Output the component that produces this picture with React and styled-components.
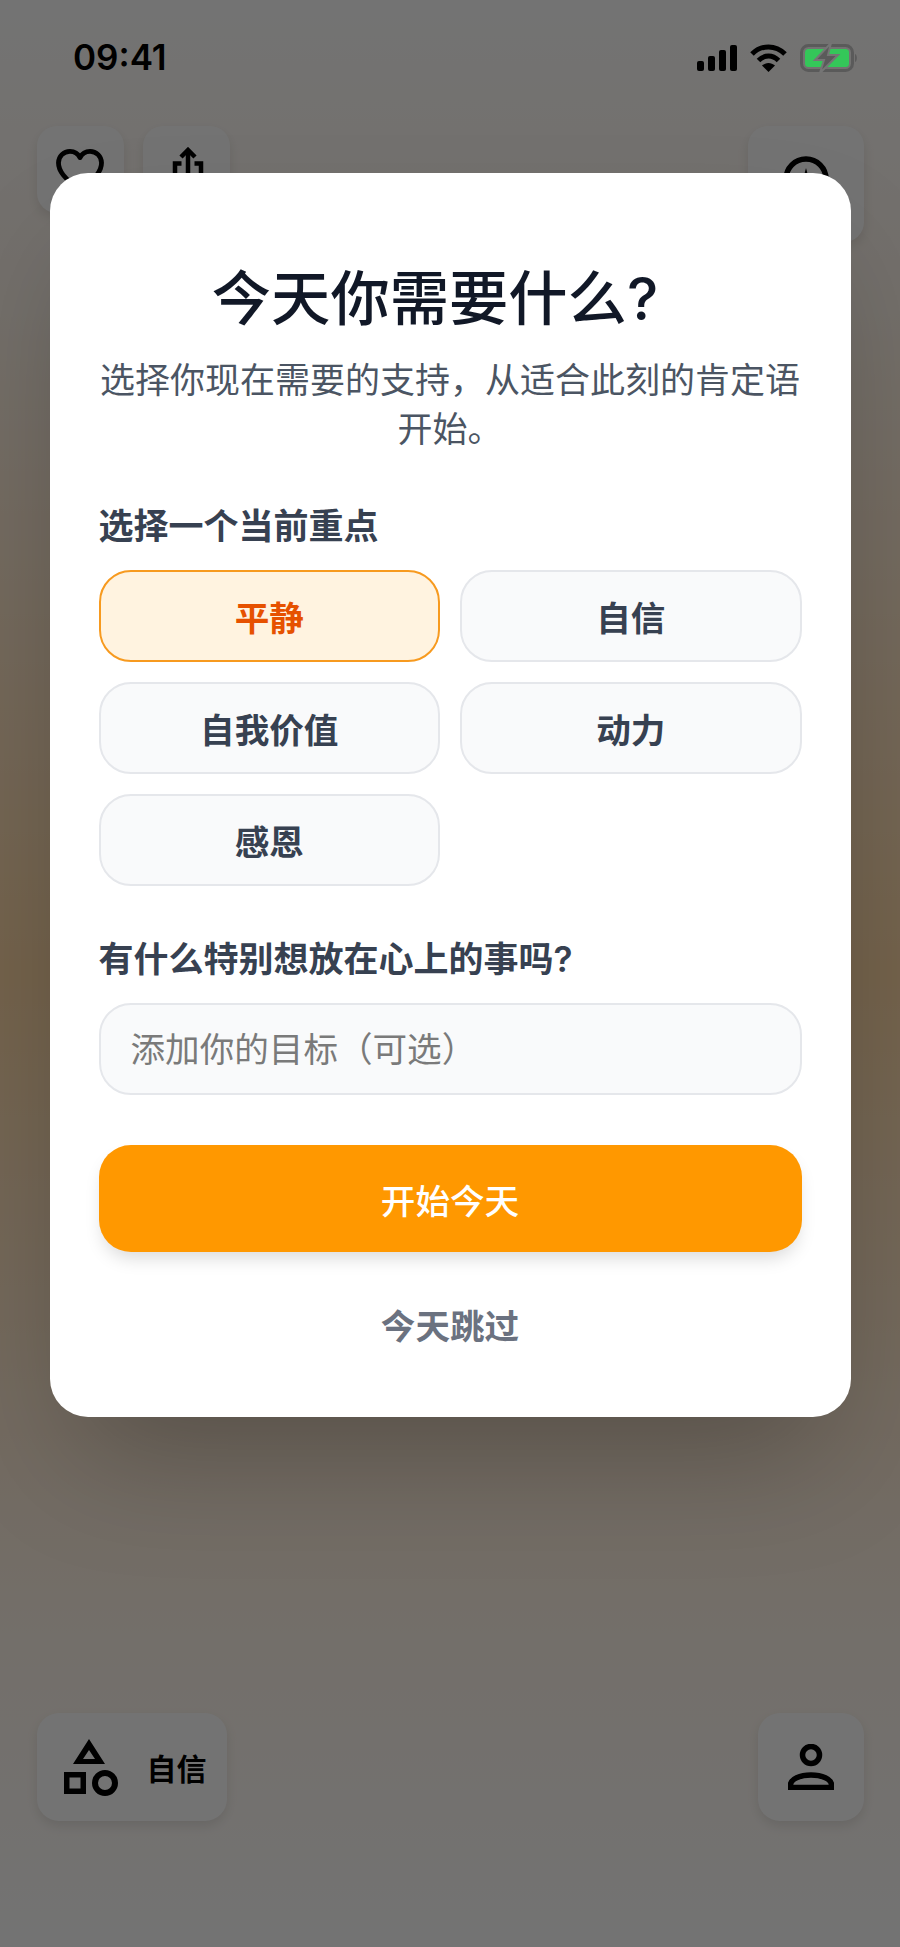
import React from 'react';
import styled, { createGlobalStyle } from 'styled-components';

const GlobalStyle = createGlobalStyle`
  html, body {
    margin: 0;
    padding: 0;
  }
  body {
    font-family: Inter, "Noto Sans CJK SC", sans-serif;
  }
  * {
    box-sizing: border-box;
  }
`;

const Screen = styled.div`
  position: relative;
  width: 900px;
  height: 1947px;
  overflow: hidden;
  display: flex;
  flex-direction: column;
  background: linear-gradient(
    180deg,
    #ffffff 0%,
    #fff6ec 15%,
    #ffe9cf 30%,
    #ffd9a6 50%,
    #ffe9cf 70%,
    #fff6ec 85%,
    #ffffff 100%
  );
`;

const StatusBar = styled.div`
  height: 126px;
  padding: 37px 42px 0 73px;
  display: flex;
  justify-content: space-between;
  align-items: flex-start;
  position: relative;
  z-index: 3;
`;

const Clock = styled.span`
  font-size: 35px;
  font-weight: 600;
  line-height: 40px;
  color: #000;
`;

const StatusIcons = styled.div`
  display: flex;
  align-items: center;
  gap: 13px;
  margin-top: 6px;
`;

const TopBar = styled.div`
  display: flex;
  justify-content: space-between;
  align-items: flex-start;
  padding: 0 36px 0 36.5px;
`;

const TopGroup = styled.div`
  display: flex;
  gap: 19px;
`;

const IconButton = styled.div`
  width: ${(p) => p.$size}px;
  height: ${(p) => p.$size}px;
  border-radius: 20px;
  background: #ffffff;
  box-shadow: 0 5px 12px rgba(0, 0, 0, 0.1);
  display: flex;
  justify-content: center;
  padding-top: ${(p) => p.$iconTop}px;
`;

const BottomBar = styled.div`
  margin-top: auto;
  margin-bottom: 126px;
  display: flex;
  justify-content: space-between;
  padding: 0 36px 0 36.5px;
`;

const ModeButton = styled.div`
  width: 190px;
  height: 108px;
  border-radius: 22px;
  background: #ffffff;
  box-shadow: 0 5px 12px rgba(0, 0, 0, 0.1);
  display: flex;
  align-items: center;
  gap: 29px;
  padding-left: 27px;
  font-size: 30px;
  font-weight: 600;
  color: #000;
`;

const ProfileButton = styled.div`
  width: 106px;
  height: 108px;
  border-radius: 22px;
  background: #ffffff;
  box-shadow: 0 5px 12px rgba(0, 0, 0, 0.1);
  display: flex;
  align-items: center;
  justify-content: center;
`;

const Overlay = styled.div`
  position: absolute;
  inset: 0;
  z-index: 2;
  background: rgba(0, 0, 0, 0.55);
  display: flex;
  justify-content: center;
  align-items: flex-start;
  padding-top: 173px;
`;

const Card = styled.section`
  width: 801px;
  height: 1244px;
  padding: 89px 49px 0;
  border-radius: 38px;
  background: #fff;
  box-shadow: 0 62px 124px -30px rgba(0, 0, 0, 0.25);
  display: flex;
  flex-direction: column;
`;

/* the heading sits a little left of centre in the reference */
const Title = styled.h2`
  margin: 0;
  padding-right: 30px;
  font-size: 59.3px;
  font-weight: 500;
  line-height: 74px;
  text-align: center;
  color: #111827;
`;

const Subtitle = styled.p`
  margin: 20px 0 0;
  font-size: 35px;
  line-height: 49px;
  text-align: center;
  color: #4b5563;
`;

const Label = styled.h3`
  margin: ${(p) => p.$top}px 0 0;
  font-size: 35px;
  font-weight: 600;
  line-height: 49px;
  color: #374151;
`;

const Options = styled.div`
  margin-top: 19px;
  display: grid;
  grid-template-columns: 1fr 1fr;
  gap: 20px;
`;

const Option = styled.button`
  height: 92px;
  padding: 0;
  border-radius: 32px;
  border: 2.5px solid ${(p) => (p.$active ? '#f79a1f' : '#e5e7eb')};
  background: ${(p) => (p.$active ? '#fff3e0' : '#f9fafb')};
  color: ${(p) => (p.$active ? '#e65100' : '#374151')};
  font-family: inherit;
  font-size: 34.6px;
  font-weight: 600;
`;

const GoalInput = styled.input`
  margin-top: 19px;
  width: 100%;
  height: 92px;
  padding: 0 30px;
  border-radius: 32px;
  border: 2.5px solid #e5e7eb;
  background: #f9fafb;
  font-family: inherit;
  font-size: 34.6px;
  outline: none;

  &::placeholder {
    color: #7a7a7a;
    opacity: 1;
  }
`;

const StartButton = styled.button`
  margin-top: 50px;
  height: 107px;
  border: none;
  border-radius: 32px;
  background: #ff9800;
  color: #fff;
  font-family: inherit;
  font-size: 34.6px;
  font-weight: 500;
  box-shadow: 0 10px 18px -4px rgba(0, 0, 0, 0.15);
`;

const SkipButton = styled.button`
  margin-top: 46px;
  height: 52px;
  border: none;
  background: none;
  color: #6b7280;
  font-family: inherit;
  font-size: 34.6px;
  font-weight: 600;
`;

const options = [
  { id: 'calm', label: '平静', active: true },
  { id: 'confidence', label: '自信' },
  { id: 'worth', label: '自我价值' },
  { id: 'drive', label: '动力' },
  { id: 'gratitude', label: '感恩' },
];

function SignalIcon() {
  return (
    <svg width="40" height="26" viewBox="0 0 40 26" fill="#000">
      <rect x="0" y="16" width="7" height="10" rx="2" />
      <rect x="11" y="11" width="7" height="15" rx="2" />
      <rect x="22" y="5" width="7" height="21" rx="2" />
      <rect x="33" y="0" width="7" height="26" rx="2" />
    </svg>
  );
}

function WifiIcon() {
  return (
    <svg width="37" height="28" viewBox="0 0 37 28" fill="none" stroke="#000" strokeWidth="5">
      <path d="M2 10C11.5 0.5 25.5 0.5 35 10" />
      <path d="M8.5 16.5C14.5 10.5 22.5 10.5 28.5 16.5" />
      <path d="M18.5 28L12 21.5C16 18 21 18 25 21.5Z" fill="#000" stroke="none" />
    </svg>
  );
}

function BatteryIcon() {
  return (
    <svg width="58" height="30" viewBox="0 0 58 30">
      <rect x="1.5" y="2.5" width="51" height="25" rx="7" fill="none" stroke="#5a5a5a" strokeWidth="3" />
      <rect x="5" y="6" width="44" height="18" rx="3.5" fill="#34c759" />
      <path d="M55 11C57.5 12 57.5 18 55 19Z" fill="#5a5a5a" />
      <path d="M31 0L15 17H24L20 30L38 12H28Z" fill="#5a5a5a" stroke="#757575" strokeWidth="2" />
    </svg>
  );
}

function HeartIcon() {
  return (
    <svg width="48" height="44" viewBox="0 0 50 46" fill="none" stroke="#000" strokeWidth="5" strokeLinejoin="round">
      <path d="M25 43C8 30 2.5 23 2.5 14.5C2.5 7.5 8 2.5 14.5 2.5C19 2.5 23 5 25 9C27 5 31 2.5 35.5 2.5C42 2.5 47.5 7.5 47.5 14.5C47.5 23 42 30 25 43Z" />
    </svg>
  );
}

function ShareIcon() {
  return (
    <svg width="36" height="50" viewBox="0 0 36 50" fill="none" stroke="#000" strokeWidth="4.5">
      <path d="M20 34V3" />
      <path d="M13 10L20 3L27 10" />
      <path d="M13.5 16.5H7V48H33V16.5H26.5" />
    </svg>
  );
}

function CompassIcon() {
  return (
    <svg width="46" height="46" viewBox="0 0 46 46" fill="none" stroke="#000" strokeWidth="5.5">
      <circle cx="23" cy="23" r="20" />
      <path d="M23 12L27 27H19Z" fill="#000" stroke="none" />
    </svg>
  );
}

function ShapesIcon() {
  return (
    <svg width="54" height="57" viewBox="0 0 54 57" fill="none">
      <path fillRule="evenodd" d="M25 0L41 25H9ZM25 11L19 20H31Z" fill="#000" />
      <rect x="2.75" y="35.75" width="16.5" height="16.5" stroke="#000" strokeWidth="5.5" />
      <circle cx="41" cy="44" r="10" stroke="#000" strokeWidth="6" />
    </svg>
  );
}

function PersonIcon() {
  return (
    <svg width="46" height="46" viewBox="0 0 46 46" fill="none" stroke="#000" strokeWidth="5.5">
      <circle cx="23" cy="11" r="8.5" />
      <path d="M2.5 43.5V41C2.5 35 12 31 23 31C34 31 43.5 35 43.5 41V43.5Z" />
    </svg>
  );
}

export default function App() {
  return (
    <>
      <GlobalStyle />
      <Screen>
        <StatusBar>
          <Clock>09:41</Clock>
          <StatusIcons>
            <SignalIcon />
            <WifiIcon />
            <BatteryIcon />
          </StatusIcons>
        </StatusBar>

        <TopBar>
          <TopGroup>
            <IconButton $size={87} $iconTop={23}>
              <HeartIcon />
            </IconButton>
            <IconButton $size={87} $iconTop={21}>
              <ShareIcon />
            </IconButton>
          </TopGroup>
          <IconButton $size={116} $iconTop={30}>
            <CompassIcon />
          </IconButton>
        </TopBar>

        <BottomBar>
          <ModeButton>
            <ShapesIcon />
            <span>自信</span>
          </ModeButton>
          <ProfileButton>
            <PersonIcon />
          </ProfileButton>
        </BottomBar>

        <Overlay>
          <Card>
            <Title>今天你需要什么?</Title>
            <Subtitle>选择你现在需要的支持，从适合此刻的肯定语开始。</Subtitle>

            <Label $top={48}>选择一个当前重点</Label>
            <Options>
              {options.map((item) => (
                <Option key={item.id} $active={item.active}>
                  {item.label}
                </Option>
              ))}
            </Options>

            <Label $top={49}>有什么特别想放在心上的事吗?</Label>
            <GoalInput placeholder="添加你的目标（可选）" />

            <StartButton>开始今天</StartButton>
            <SkipButton>今天跳过</SkipButton>
          </Card>
        </Overlay>
      </Screen>
    </>
  );
}
